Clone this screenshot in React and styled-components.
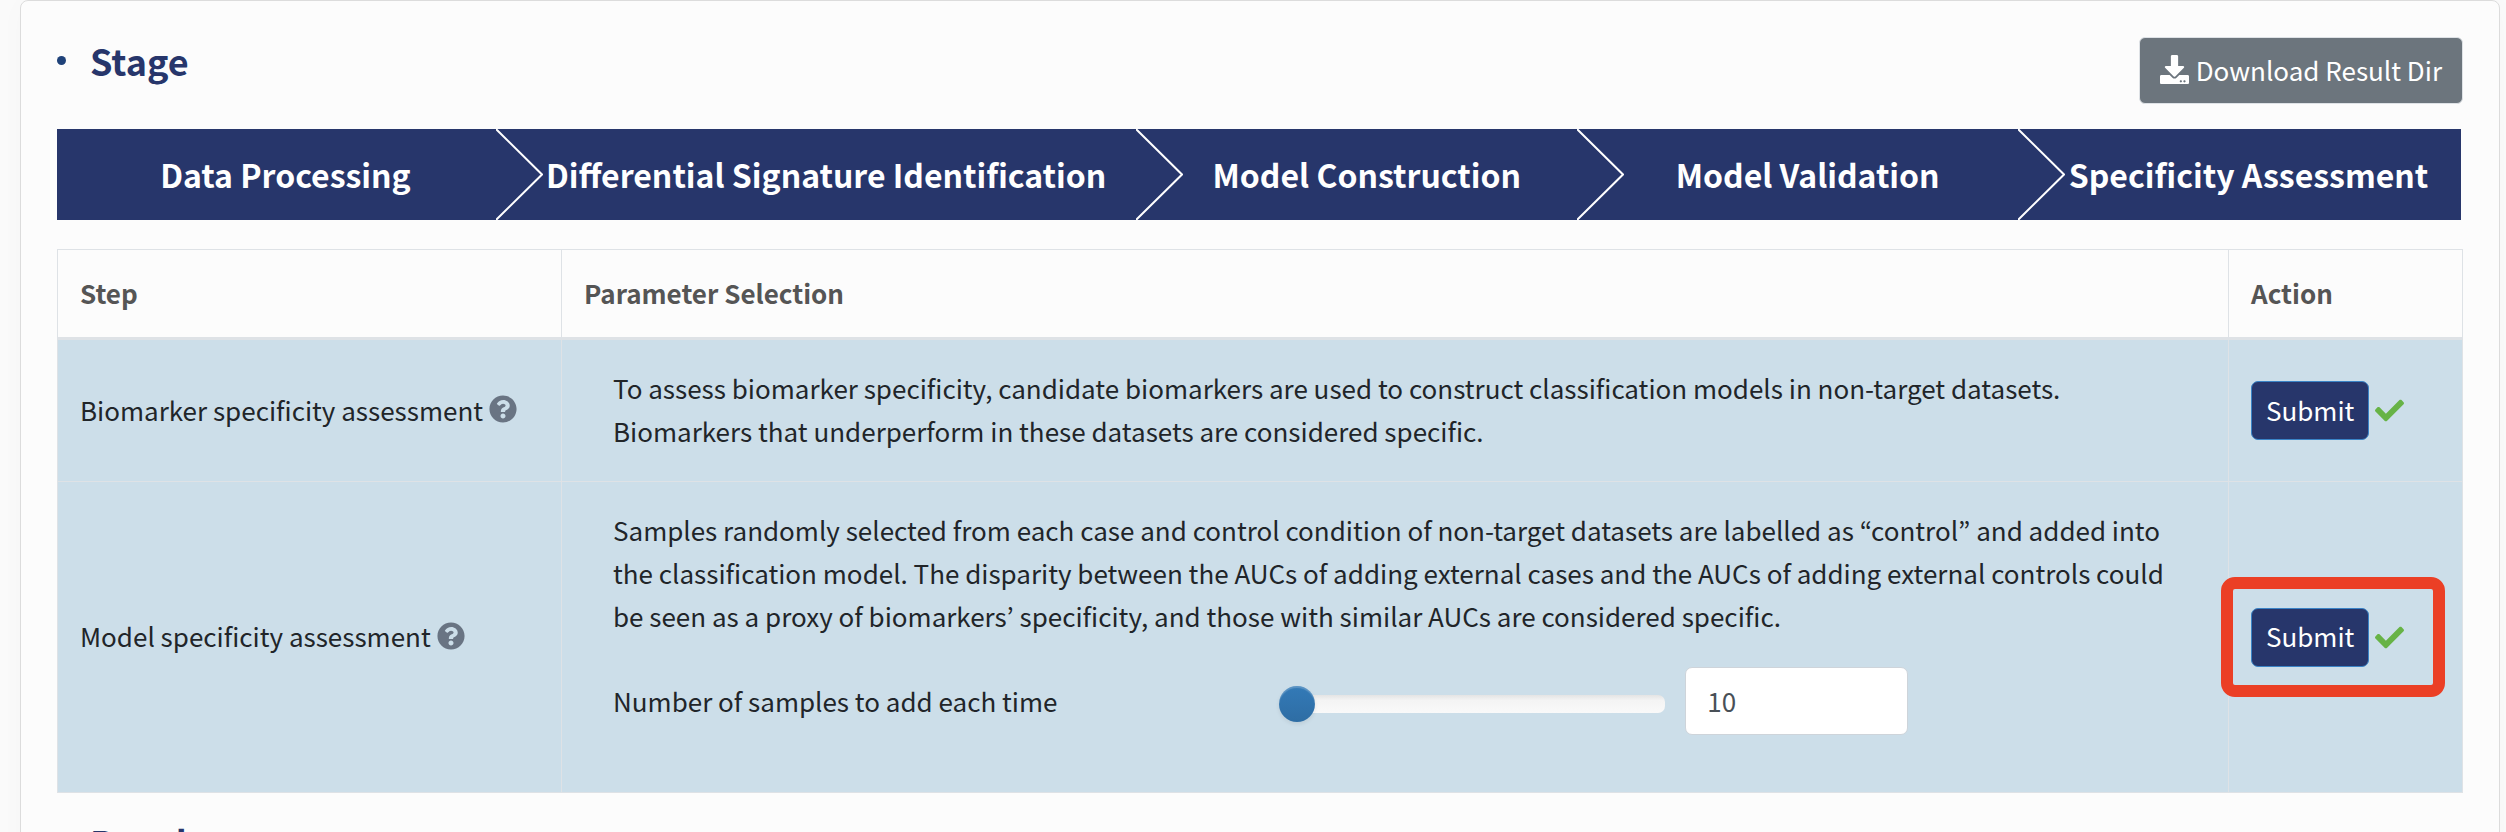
import React, { useState } from 'react';
import styled, { createGlobalStyle } from 'styled-components';
import { FaDownload, FaQuestionCircle, FaCheck } from 'react-icons/fa';

const GlobalStyle = createGlobalStyle`
  * {
    box-sizing: border-box;
  }

  body {
    margin: 0;
    background-color: #fafafa;
    color: #212529;
    font-family: 'Noto Sans CJK KR', 'Open Sans', sans-serif;
    font-size: 26px;
    line-height: 43px;
  }

  button,
  input {
    font: inherit;
  }
`;

const Card = styled.main`
  margin: 0 6px 0 20px;
  padding: 36px 36px 40px;
  border: 1px solid #dcdcdc;
  border-radius: 8px;
  background-color: #fcfcfc;
  box-shadow: 0 0 30px rgba(0, 0, 0, 0.02);
`;

const CardHeader = styled.header`
  display: flex;
  justify-content: space-between;
  align-items: flex-start;
  margin-bottom: 25px;
`;

const SectionTitle = styled.h2`
  display: flex;
  align-items: center;
  gap: 24px;
  margin: 0;
  color: #27366b;
  font-size: 36px;
  font-weight: 700;
  line-height: 46px;

  &::before {
    content: '';
    width: 9px;
    height: 9px;
    border-radius: 50%;
    background-color: #1f4279;
  }
`;

const DownloadButton = styled.button`
  display: flex;
  align-items: center;
  gap: 7px;
  height: 67px;
  padding: 0 20px 2px;
  border: 1px solid #dee2e6;
  border-radius: 6px;
  background-color: #6c757d;
  color: #fff;
  cursor: pointer;

  svg {
    font-size: 29px;
  }
`;

const StageBar = styled.ol`
  display: flex;
  margin: 0 2px 29px 0;
  padding: 0;
  list-style: none;
  background-color: #27366b;
`;

const StageItem = styled.li`
  position: relative;
  flex: 1 1 0;
  padding: 24px 32px 24px 48px;
  color: #fff;
  font-size: 32px;
  font-weight: 700;
  text-align: center;
  white-space: nowrap;
`;

const StageArrow = styled.svg`
  position: absolute;
  top: 0;
  left: -2px;
  width: 47px;
  height: 100%;
`;

const StepTable = styled.table`
  width: 100%;
  table-layout: fixed;
  border-collapse: collapse;
  margin-bottom: 26px;
`;

const HeadCell = styled.th`
  width: ${(props) => props.$width || 'auto'};
  padding: 21px 22px 23px;
  border: 1px solid #dee2e6;
  border-bottom-width: 3px;
  color: #555;
  font-weight: 700;
  text-align: left;
`;

const Cell = styled.td`
  padding: 22px;
  border: 1px solid #dee2e6;
  background-color: #ccdee9;
`;

const StepName = styled.div`
  display: flex;
  align-items: center;
  gap: 6px;
  padding-bottom: 3px;

  svg {
    color: #697483;
    font-size: 28px;
  }
`;

const Description = styled.p`
  margin: 0;
  padding: 4px 29px 7px;
`;

const ParameterRow = styled.div`
  display: grid;
  grid-template-columns: 5fr 3fr 2fr 2fr;
  align-items: center;
  padding: 23px 0 35px;
`;

const ParameterLabel = styled.label`
  padding: 0 0 2px 29px;
`;

const Slider = styled.input`
  appearance: none;
  width: calc(100% - 19px);
  height: 36px;
  margin: 6px 0 0 19px;
  background: transparent;
  cursor: pointer;

  &::-webkit-slider-runnable-track {
    height: 18px;
    border-radius: 7px;
    background: linear-gradient(#e4e4e4, #f4f4f4 30%, #f9f9f9) 18px 0 / calc(100% - 18px) 100% no-repeat;
  }

  &::-webkit-slider-thumb {
    appearance: none;
    width: 36px;
    height: 36px;
    margin-top: -9px;
    border-radius: 50%;
    background: linear-gradient(#337ab7, #2e6da4);
    box-shadow: inset 0 2px 1px rgba(255, 255, 255, 0.2), 0 2px 4px rgba(0, 0, 0, 0.08);
  }
`;

const NumberInput = styled.input`
  width: calc(100% - 48px);
  height: 68px;
  margin-left: 20px;
  padding: 0 21px 2px;
  border: 1px solid #ced4da;
  border-radius: 7px;
  background-color: #fff;
  color: #495057;
`;

const Action = styled.div`
  position: relative;
  display: inline-flex;
  align-items: center;
  gap: 6px;
  vertical-align: middle;

  svg {
    color: #67b346;
    font-size: 29px;
  }
`;

const SubmitButton = styled.button`
  height: 59px;
  padding: 0 14px 3px;
  border: 1px solid #3a83c6;
  border-radius: 7px;
  background-color: #27366b;
  color: #fff;
  cursor: pointer;
`;

const Highlight = styled.span`
  position: absolute;
  inset: -31px -41px -30px -30px;
  border: 12px solid #eb3f25;
  border-radius: 14px;
  pointer-events: none;
`;

const stages = [
  'Data Processing',
  'Differential Signature Identification',
  'Model Construction',
  'Model Validation',
  'Specificity Assessment',
];

// One row of the step table
const StepRow = ({ name, highlighted, children }) => (
  <tr>
    <Cell>
      <StepName>
        {name}
        <FaQuestionCircle />
      </StepName>
    </Cell>
    <Cell>{children}</Cell>
    <Cell>
      <Action>
        <SubmitButton type="button">Submit</SubmitButton>
        <FaCheck />
        {highlighted && <Highlight />}
      </Action>
    </Cell>
  </tr>
);

const App = () => {
  const [samples, setSamples] = useState(10);

  const handleChange = (e) => setSamples(e.target.value);

  return (
    <>
      <GlobalStyle />
      <Card>
        <CardHeader>
          <SectionTitle>Stage</SectionTitle>
          <DownloadButton type="button">
            <FaDownload />
            Download Result Dir
          </DownloadButton>
        </CardHeader>

        <StageBar>
          {stages.map((stage, index) => (
            <StageItem key={stage}>
              {index > 0 && (
                <StageArrow viewBox="0 0 47 91" preserveAspectRatio="none">
                  <path d="M0 0L46 45.5L0 91" fill="none" stroke="#fff" strokeWidth="2" />
                </StageArrow>
              )}
              {stage}
            </StageItem>
          ))}
        </StageBar>

        <StepTable>
          <thead>
            <tr>
              <HeadCell $width="504px">Step</HeadCell>
              <HeadCell>Parameter Selection</HeadCell>
              <HeadCell $width="234px">Action</HeadCell>
            </tr>
          </thead>
          <tbody>
            <StepRow name="Biomarker specificity assessment">
              <Description>
                To assess biomarker specificity, candidate biomarkers are used to construct classification models in
                non-target datasets. Biomarkers that underperform in these datasets are considered specific.
              </Description>
            </StepRow>
            <StepRow name="Model specificity assessment" highlighted>
              <Description>
                Samples randomly selected from each case and control condition of non-target datasets are labelled as
                “control” and added into the classification model. The disparity between the AUCs of adding external
                cases and the AUCs of adding external controls could be seen as a proxy of biomarkers’ specificity, and
                those with similar AUCs are considered specific.
              </Description>
              <ParameterRow>
                <ParameterLabel htmlFor="samples">Number of samples to add each time</ParameterLabel>
                <Slider
                  type="range"
                  min="10"
                  max="100"
                  value={samples}
                  onChange={handleChange}
                  aria-label="Number of samples"
                />
                <NumberInput id="samples" type="text" value={samples} onChange={handleChange} />
              </ParameterRow>
            </StepRow>
          </tbody>
        </StepTable>

        <SectionTitle>Results</SectionTitle>
      </Card>
    </>
  );
};

export default App;
